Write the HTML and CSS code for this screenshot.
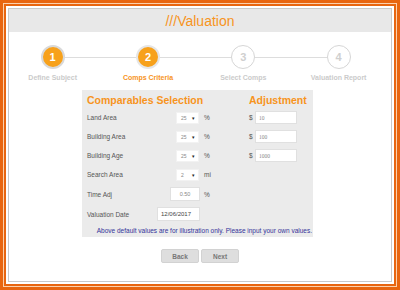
FILE: index.html
```html
<!DOCTYPE html>
<html lang="en">
<head>
    <meta charset="UTF-8">
    <meta name="viewport" content="width=device-width, initial-scale=1.0">
    <title>Valuation</title>
    <link rel="stylesheet" href="styles.css">
</head>
<body>
    <div class="frame">
        <div class="frame-inner">
            <div class="page">
                <header class="topbar">
                    <h1>///Valuation</h1>
                </header>

                <ol class="steps">
                    <li class="step done"><span class="dot">1</span><span class="step-label">Define Subject</span></li>
                    <li class="step done current"><span class="dot">2</span><span class="step-label">Comps Criteria</span></li>
                    <li class="step"><span class="dot">3</span><span class="step-label">Select Comps</span></li>
                    <li class="step"><span class="dot">4</span><span class="step-label">Valuation Report</span></li>
                </ol>

                <section class="panel">
                    <h2 class="panel-title left">Comparables Selection</h2>
                    <h2 class="panel-title right">Adjustment</h2>

                    <span class="label">Land Area</span>
                    <span class="select"><span>25</span><span class="caret">&#9662;</span></span>
                    <span class="unit">%</span>
                    <span class="dollar">$</span>
                    <input class="field money" type="text" value="10">

                    <span class="label">Building Area</span>
                    <span class="select"><span>25</span><span class="caret">&#9662;</span></span>
                    <span class="unit">%</span>
                    <span class="dollar">$</span>
                    <input class="field money" type="text" value="100">

                    <span class="label">Building Age</span>
                    <span class="select"><span>25</span><span class="caret">&#9662;</span></span>
                    <span class="unit">%</span>
                    <span class="dollar">$</span>
                    <input class="field money" type="text" value="1000">

                    <span class="label">Search Area</span>
                    <span class="select"><span>2</span><span class="caret">&#9662;</span></span>
                    <span class="unit">mi</span>

                    <span class="label">Time Adj</span>
                    <input class="field time" type="text" value="0.50">
                    <span class="unit">%</span>

                    <span class="label">Valuation Date</span>
                    <input class="field date" type="text" value="12/06/2017">

                    <p class="note">Above default values are for illustration only. Please input your own values.</p>
                </section>

                <div class="actions">
                    <button>Back</button>
                    <button>Next</button>
                </div>
            </div>
        </div>
    </div>
</body>
</html>
```

FILE: styles.css
```css
body {
    margin: 0;
    font-family: "Liberation Sans", Arial, sans-serif;
    background: #fff;
}

.frame {
    height: 290px;
    box-sizing: border-box;
    border: 3px solid #e8650f;
    padding: 1px;
    background: #fbd0ac;
}

.frame-inner {
    height: 100%;
    box-sizing: border-box;
    border: 2px solid #e8650f;
    padding: 2px;
    background: #fff;
}

.page {
    height: 100%;
    box-sizing: border-box;
    border: 1px solid #c9c9c9;
    background: #fff;
}

.topbar {
    height: 23px;
    background: #e8e8e8;
    display: flex;
    align-items: center;
    justify-content: center;
}

.topbar h1 {
    margin: 0;
    font-size: 14px;
    font-weight: normal;
    color: #f7941d;
}

/* wizard steps */
.steps {
    list-style: none;
    margin: 13px 0 0 -4px;
    padding: 0;
    display: grid;
    grid-template-columns: repeat(4, 95.33px);
    position: relative;
}

.steps::before {
    content: "";
    position: absolute;
    left: 48px;
    right: 48px;
    top: 12px;
    height: 1px;
    background: #ddd;
}

.step {
    display: flex;
    flex-direction: column;
    align-items: center;
    position: relative;
}

.dot {
    width: 24px;
    height: 24px;
    box-sizing: border-box;
    border-radius: 50%;
    border: 1.5px solid #d6d6d6;
    background: #fff;
    color: #cfcfcf;
    font-size: 11px;
    font-weight: bold;
    display: flex;
    align-items: center;
    justify-content: center;
}

.step.done .dot {
    background: #f7a11b;
    color: #fff;
    border: 2px solid #d9d9d9;
}

.step.current .dot {
    border-color: #e6e6e6;
}

.step-label {
    margin-top: 4px;
    line-height: 9px;
    font-size: 7px;
    font-weight: bold;
    color: #cbcbcb;
}

.step.current .step-label {
    color: #f7941d;
}

/* criteria panel */
.panel {
    width: 231px;
    box-sizing: border-box;
    margin: 8px 0 0 73px;
    padding: 1px 16px 0 5px;
    background: #ebebeb;
    display: grid;
    grid-template-columns: 68px 45px 49px 6px 42px;
    grid-template-rows: 17px 19px 19px 19px 19px 20px 20px 13px;
    align-items: center;
}

.panel-title {
    margin: 0;
    font-size: 10.5px;
    font-weight: bold;
    color: #f7941d;
}

.panel-title.left { grid-column: 1 / 4; }
.panel-title.right { grid-column: 4 / 6; }

.label {
    grid-column: 1;
    font-size: 6.5px;
    color: #555;
}

.select {
    grid-column: 2;
    justify-self: end;
    margin-right: 1px;
    width: 23px;
    height: 12px;
    box-sizing: border-box;
    background: #fff;
    border: 1px solid #f2f2f2;
    padding: 0 3px 0 4px;
    display: flex;
    align-items: center;
    justify-content: space-between;
    font-size: 5px;
    color: #888;
}

.caret {
    color: #222;
    font-size: 5px;
}

.unit {
    grid-column: 3;
    padding-left: 4px;
    font-size: 6.5px;
    color: #555;
}

.dollar {
    grid-column: 4;
    font-size: 6.5px;
    color: #555;
}

.field {
    box-sizing: border-box;
    height: 14px;
    margin: 0;
    padding: 0 3px;
    border: 1px solid #e0e0e0;
    background: #fff;
    font-family: "Liberation Sans", Arial, sans-serif;
    font-size: 5.5px;
    color: #888;
    outline: none;
}

.field.money {
    grid-column: 5;
    width: 42px;
    height: 13px;
    font-family: "Liberation Serif", serif;
}

.field.time {
    grid-column: 2;
    justify-self: end;
    width: 30px;
    text-align: center;
}

.field.date {
    grid-column: 2;
    justify-self: end;
    width: 43px;
    font-size: 6px;
    color: #444;
}

.note {
    grid-column: 1 / -1;
    justify-self: end;
    margin: 0 -15px 0 0;
    font-size: 6.5px;
    color: #33339a;
}

/* footer buttons */
.actions {
    margin-top: 12px;
    display: flex;
    justify-content: center;
    gap: 2px;
}

button {
    width: 38px;
    height: 14px;
    padding: 0;
    border: 1px solid #d2d2d2;
    border-radius: 2px;
    background: #dedede;
    font-family: "Liberation Sans", Arial, sans-serif;
    font-size: 6.5px;
    font-weight: bold;
    color: #777;
}
```
